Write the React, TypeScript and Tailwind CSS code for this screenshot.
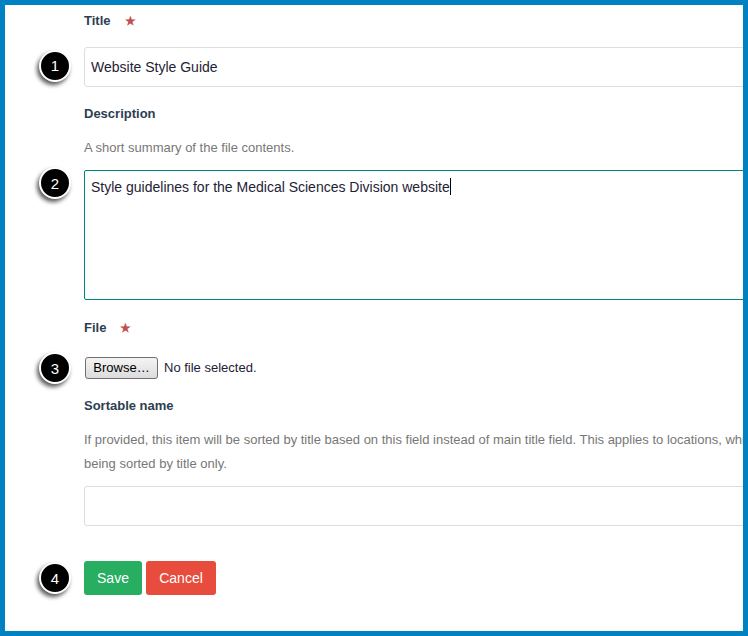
import { FC, ReactNode } from 'react';

const Step: FC<{ n: number }> = ({ n }) => (
  <div className="w-[32px] h-[32px] rounded-full bg-black border-2 border-white shadow-[-2px_3px_4px_rgba(0,0,0,0.65)] flex items-center justify-center text-white text-[15px] leading-none">
    {n}
  </div>
);

// one row: left gutter for the step marker, content on the right
const Row: FC<{ step?: number; className?: string; gutter?: string; children: ReactNode }> = ({ step, className = '', gutter = '', children }) => (
  <div className={`flex items-center ${className}`}>
    <div className={`w-[79px] shrink-0 flex justify-start pl-[34px] ${gutter}`}>{step ? <Step n={step} /> : null}</div>
    <div className="flex-1 min-w-0">{children}</div>
  </div>
);

const Label: FC<{ text: string; required?: boolean }> = ({ text, required }) => (
  <div className="h-[20px] leading-[20px] text-[13px] font-bold text-[#2c3e50] flex items-center">
    {text}
    {required && <span className="ml-[14px] text-[12px] text-[#c0504d]">★</span>}
  </div>
);

const App: FC = () => {
  return (
    <div className="w-[748px] h-[636px] border-[5px] border-[#0081c2] bg-white overflow-hidden font-['Liberation_Sans',Arial,sans-serif]">
      <Row className="mt-[6px]">
        <Label text="Title" required />
      </Row>

      <Row step={1} className="mt-[16px]" gutter="-mt-[3px]">
        <div className="w-[700px] h-[40px] border border-[#dddddd] rounded-[3px] px-[6px] flex items-center text-[14px] text-[#1e2235]">
          Website Style Guide
        </div>
      </Row>

      <Row className="mt-[17px]">
        <Label text="Description" />
      </Row>

      <Row className="mt-[14px]">
        <div className="h-[20px] leading-[20px] text-[13px] text-[#777777]">A short summary of the file contents.</div>
      </Row>

      <Row step={2} className="mt-[12px] !items-start" gutter="-mt-[3px]">
        <div className="w-[700px] h-[130px] border border-[#00857a] rounded-[2px] px-[6px] pt-[6px] text-[14px] text-[#1e2235] leading-[20px]">
          Style guidelines for the Medical Sciences Division website
          <span className="inline-block w-px h-[17px] bg-black align-[-3px]"></span>
        </div>
      </Row>

      <Row className="mt-[18px]">
        <Label text="File" required />
      </Row>

      <Row step={3} className="mt-[14px]">
        <div className="flex items-center gap-[6px] h-[22px]">
          <div className="ml-px w-[73px] h-[22px] border border-[#707070] rounded-[3px] bg-gradient-to-b from-[#f4f4f4] to-[#dcdcdc] flex items-center justify-center text-[13px] text-black">
            Browse…
          </div>
          <span className="text-[13px] text-[#1e2235]">No file selected.</span>
        </div>
      </Row>

      <Row className="mt-[12px]">
        <Label text="Sortable name" />
      </Row>

      <Row className="mt-[12px]">
        <div className="w-[720px] text-[13px] leading-[24px] text-[#777777]">
          If provided, this item will be sorted by title based on this field instead of main title field. This applies to locations, which are
          <br />
          being sorted by title only.
        </div>
      </Row>

      <Row className="mt-[10px]">
        <div className="w-[700px] h-[40px] border border-[#dddddd] rounded-[3px]"></div>
      </Row>

      <Row step={4} className="mt-[35px]">
        <div className="flex gap-[4px]">
          <button className="w-[58px] h-[34px] rounded-[3px] bg-[#27ae60] text-white text-[14px]">Save</button>
          <button className="w-[70px] h-[34px] rounded-[3px] bg-[#e74c3c] text-white text-[14px]">Cancel</button>
        </div>
      </Row>
    </div>
  );
};

export default App;
